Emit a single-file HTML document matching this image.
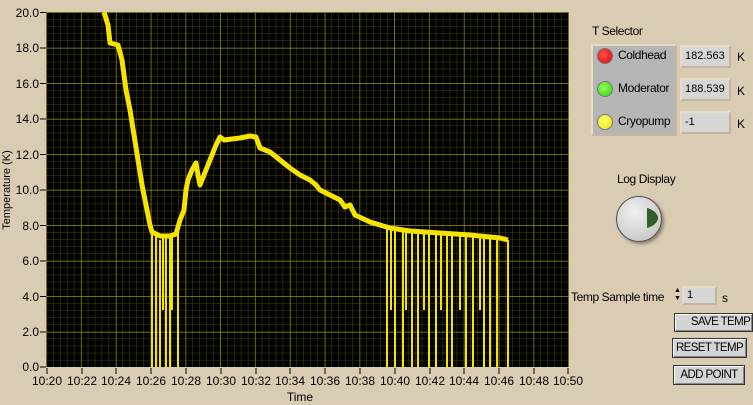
<!DOCTYPE html>
<html><head><style>
body{margin:0;width:753px;height:405px;background:#dacbb3;font-family:"Liberation Sans",sans-serif;position:relative;overflow:hidden}
.a{position:absolute;font-size:12px;color:#000;white-space:nowrap;letter-spacing:-0.4px}
.fld{position:absolute;background:#d6d6d6;border:2px solid #e9dcc6;border-right-color:#c4b59c;border-bottom-color:#c4b59c;font-size:11px;padding-left:3px;line-height:17px;box-sizing:border-box;white-space:nowrap}
.led{position:absolute;width:14px;height:14px;border-radius:50%;border:1px solid #777}
.btn{position:absolute;background:#d4d4d4;border:1px solid #333;box-shadow:inset 1px 1px 0 #fff,inset -1px -1px 0 #888;font-size:11.5px;letter-spacing:-0.6px;text-align:center;box-sizing:border-box;white-space:nowrap}
</style></head><body>
<svg width="753" height="405" style="position:absolute;left:0;top:0" font-family="Liberation Sans" font-size="12">
<defs>
<pattern id="mn" x="46" y="12" width="6.96" height="7.1" patternUnits="userSpaceOnUse"><path d="M0 0H7M0 0V7.1" stroke="#4a4a00" stroke-width="1" fill="none"/></pattern>
<pattern id="mj" x="46.5" y="12.5" width="34.8" height="35.5" patternUnits="userSpaceOnUse"><path d="M0 0H35M0 0V35.5" stroke="#9a9a10" stroke-width="1" fill="none"/></pattern>
</defs>
<rect x="46" y="12" width="523" height="355" fill="#000"/>
<rect x="46" y="12" width="523" height="355" fill="url(#mn)"/>
<rect x="46" y="12" width="523" height="355" fill="url(#mj)"/>
<g stroke="#f5e400" stroke-width="2">
<path d="M152 234V367M156 234V367M160 240V367M163 236V310M166 236V367M170 236V367M172 236V310M178 232V367"/>
<path d="M387 228V367M391 230V310M395 230V367M403 230V367M406 231V310M412 232V367M418 232V367M424 232V310M429 233V367M436 233V367M441 233V310M447 234V367M452 234V367M460 234V310M466 235V367M473 236V367M480 236V310M484 236V367M490 237V367M497 238V367M508 240V367"/>
</g>
<polyline fill="none" stroke="#f5e400" stroke-width="5" stroke-linejoin="round" points="104,12 108,25 110,43 118,45 122,60 126,90 130,110 134,135 138,160 142,185 146,205 150,225 152,232 156,234 160,236 170,236 176,234 180,220 184,210 186,190 188,180 192,170 196,163 198,175 200,185 204,175 208,165 212,155 216,145 220,137 224,140 232,139 240,138 250,136 256,137 260,148 270,152 280,160 290,168 300,175 310,180 316,185 320,190 330,195 340,200 345,207 350,205 355,215 370,222 390,228 410,231 440,233 470,235 500,238 508,240"/>
<g stroke="#000"><path d="M40 12.5H46M40 48H46M40 83.5H46M40 119H46M40 154.5H46M40 190H46M40 225.5H46M40 261H46M40 296.5H46M40 332H46M40 367H46"/>
<path d="M47 368V374M82 368V374M116 368V374M151 368V374M186 368V374M221 368V374M256 368V374M290 368V374M325 368V374M360 368V374M395 368V374M430 368V374M464 368V374M499 368V374M534 368V374M568 368V374"/></g>
<g text-anchor="end" fill="#000"><text x="39" y="17">20.0</text><text x="39" y="52">18.0</text><text x="39" y="88">16.0</text><text x="39" y="123">14.0</text><text x="39" y="159">12.0</text><text x="39" y="194">10.0</text><text x="39" y="230">8.0</text><text x="39" y="265">6.0</text><text x="39" y="301">4.0</text><text x="39" y="336">2.0</text><text x="39" y="371">0.0</text></g>
<g text-anchor="middle" fill="#000"><text x="47" y="385">10:20</text><text x="82" y="385">10:22</text><text x="116" y="385">10:24</text><text x="151" y="385">10:26</text><text x="186" y="385">10:28</text><text x="221" y="385">10:30</text><text x="256" y="385">10:32</text><text x="290" y="385">10:34</text><text x="325" y="385">10:36</text><text x="360" y="385">10:38</text><text x="395" y="385">10:40</text><text x="430" y="385">10:42</text><text x="464" y="385">10:44</text><text x="499" y="385">10:46</text><text x="534" y="385">10:48</text><text x="568" y="385">10:50</text>
<text x="300" y="401">Time</text>
<text transform="translate(10 190) rotate(-90)" font-size="11">Temperature (K)</text></g>
</svg>
<div class="a" style="left:592px;top:24px">T Selector</div>
<div style="position:absolute;left:591px;top:44px;width:86px;height:92px;background:#b5b5b5;border:2px solid #e9dcc6;border-right-color:#c4b59c;border-bottom-color:#c4b59c;box-sizing:border-box"></div>
<div class="led" style="left:597px;top:48px;background:radial-gradient(circle at 40% 40%,#ff5050,#e00000)"></div>
<div class="led" style="left:597px;top:81px;background:radial-gradient(circle at 40% 40%,#90ff60,#30d000)"></div>
<div class="led" style="left:597px;top:114px;background:radial-gradient(circle at 40% 40%,#ffff70,#e6e600)"></div>
<div class="a" style="left:618px;top:48px">Coldhead</div>
<div class="a" style="left:618px;top:81px">Moderator</div>
<div class="a" style="left:618px;top:114px">Cryopump</div>
<div class="fld" style="left:680px;top:45px;width:51px;height:23px;padding-top:1px">182.563</div>
<div class="fld" style="left:680px;top:78px;width:51px;height:23px;padding-top:1px">188.539</div>
<div class="fld" style="left:680px;top:111px;width:51px;height:23px;padding-top:1px">-1</div>
<div class="a" style="left:737px;top:50px">K</div><div class="a" style="left:737px;top:84px">K</div><div class="a" style="left:737px;top:117px">K</div>
<div class="a" style="left:617px;top:172px">Log Display</div>
<div style="position:absolute;left:616px;top:196px;width:44px;height:44px;border-radius:50%;background:radial-gradient(circle at 40% 35%,#f0f0f0,#bdbdbd);border:1px solid #555;box-shadow:2px 2px 3px #8a7f70"></div>
<svg style="position:absolute;left:646px;top:207px" width="14" height="22"><path d="M1 1C9 3 12 8 12 11S9 19 1 21Z" fill="#2f5f24"/></svg>
<div class="a" style="left:571px;top:290px">Temp Sample time</div>
<div style="position:absolute;left:674px;top:287px;width:7px;height:17px;font-size:7px;line-height:8px">▲<br>▼</div>
<div class="fld" style="left:682px;top:286px;width:35px;height:19px;line-height:14px">1</div>
<div class="a" style="left:722px;top:291px">s</div>
<div class="btn" style="left:674px;top:313px;width:79px;height:19px;line-height:17px;padding-left:14px">SAVE TEMP</div>
<div class="btn" style="left:672px;top:338px;width:75px;height:20px;line-height:18px">RESET TEMP</div>
<div class="btn" style="left:673px;top:365px;width:72px;height:20px;line-height:18px">ADD POINT</div>
</body></html>
